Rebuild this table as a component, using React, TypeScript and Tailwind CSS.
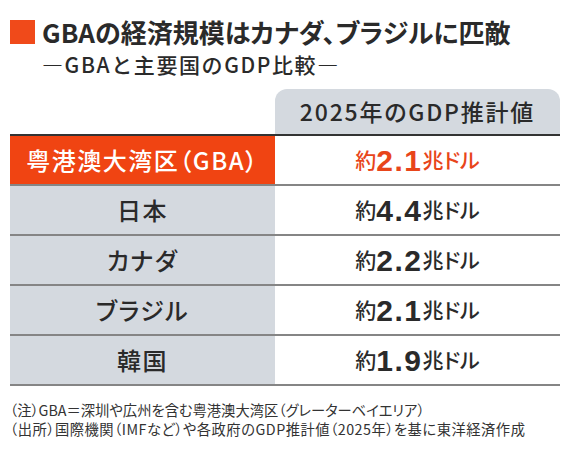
import React from 'react';

type Row = { label: string; pre: string; num: string; unit: string; highlight?: boolean };

const rows: Row[] = [
  { label: '粤港澳大湾区（GBA）', pre: '約', num: '2.1', unit: '兆ドル', highlight: true },
  { label: '日本', pre: '約', num: '4.4', unit: '兆ドル' },
  { label: 'カナダ', pre: '約', num: '2.2', unit: '兆ドル' },
  { label: 'ブラジル', pre: '約', num: '2.1', unit: '兆ドル' },
  { label: '韓国', pre: '約', num: '1.9', unit: '兆ドル' },
];

export default function App() {
  return (
    <div className="w-[570px] h-[455px] bg-white px-[10px] pt-[20px] text-[#2a2a2a] font-['Noto_Sans_CJK_JP','Noto_Sans',sans-serif] [font-feature-settings:'palt']">
      {/* Title */}
      <div className="flex items-center h-[24px]">
        <div className="w-[25px] h-[24px] bg-[#f04a1a] shrink-0" />
        <h1 className="ml-[7px] text-[26px] font-bold leading-none">
          GBAの経済規模はカナダ、ブラジルに匹敵
        </h1>
      </div>
      <div className="mt-[10px] pl-[32px] text-[21px] font-medium leading-none tracking-[1.6px] [font-feature-settings:normal]">
        ―GBAと主要国のGDP比較―
      </div>

      {/* Table */}
      <div className="mt-[14px]">
        <div className="flex">
          <div className="w-[265px]" />
          <div className="flex-1 h-[45px] bg-[#d4d9df] rounded-t-[12px] flex items-center justify-center text-[23px] font-medium tracking-[1.8px]">
            2025年のGDP推計値
          </div>
        </div>
        <div className="h-[2px] bg-[#333]" />
        {rows.map((r) => (
          <div key={r.label} className="flex h-[50px] border-b-2 border-[#858585]">
            <div
              className={
                r.highlight
                  ? 'w-[265px] bg-[#f04412] text-white flex items-center justify-center text-[24px] font-medium tracking-[1.5px]'
                  : 'w-[265px] bg-[#d4d9df] flex items-center justify-center text-[24px] font-medium tracking-[1.5px]'
              }
            >
              {r.label}
            </div>
            <div
              className={
                r.highlight
                  ? 'flex-1 bg-white flex items-center justify-center text-[#e8451a]'
                  : 'flex-1 bg-white flex items-center justify-center'
              }
            >
              <span className="text-[21px] font-medium">{r.pre}</span>
              <span className="text-[30px] font-bold tracking-[1.5px] font-['Liberation_Sans','Noto_Sans_CJK_JP',sans-serif]">
                {r.num}
              </span>
              <span className="text-[21px] font-medium">{r.unit}</span>
            </div>
          </div>
        ))}
      </div>

      {/* Notes */}
      <div className="mt-[14px] text-[14.3px] leading-[19px] text-[#333]">
        <div>（注）GBA＝深圳や広州を含む粤港澳大湾区（グレーターベイエリア）</div>
        <div className="tracking-[0.5px]">（出所）国際機関（IMFなど）や各政府のGDP推計値（2025年）を基に東洋経済作成</div>
      </div>
    </div>
  );
}
